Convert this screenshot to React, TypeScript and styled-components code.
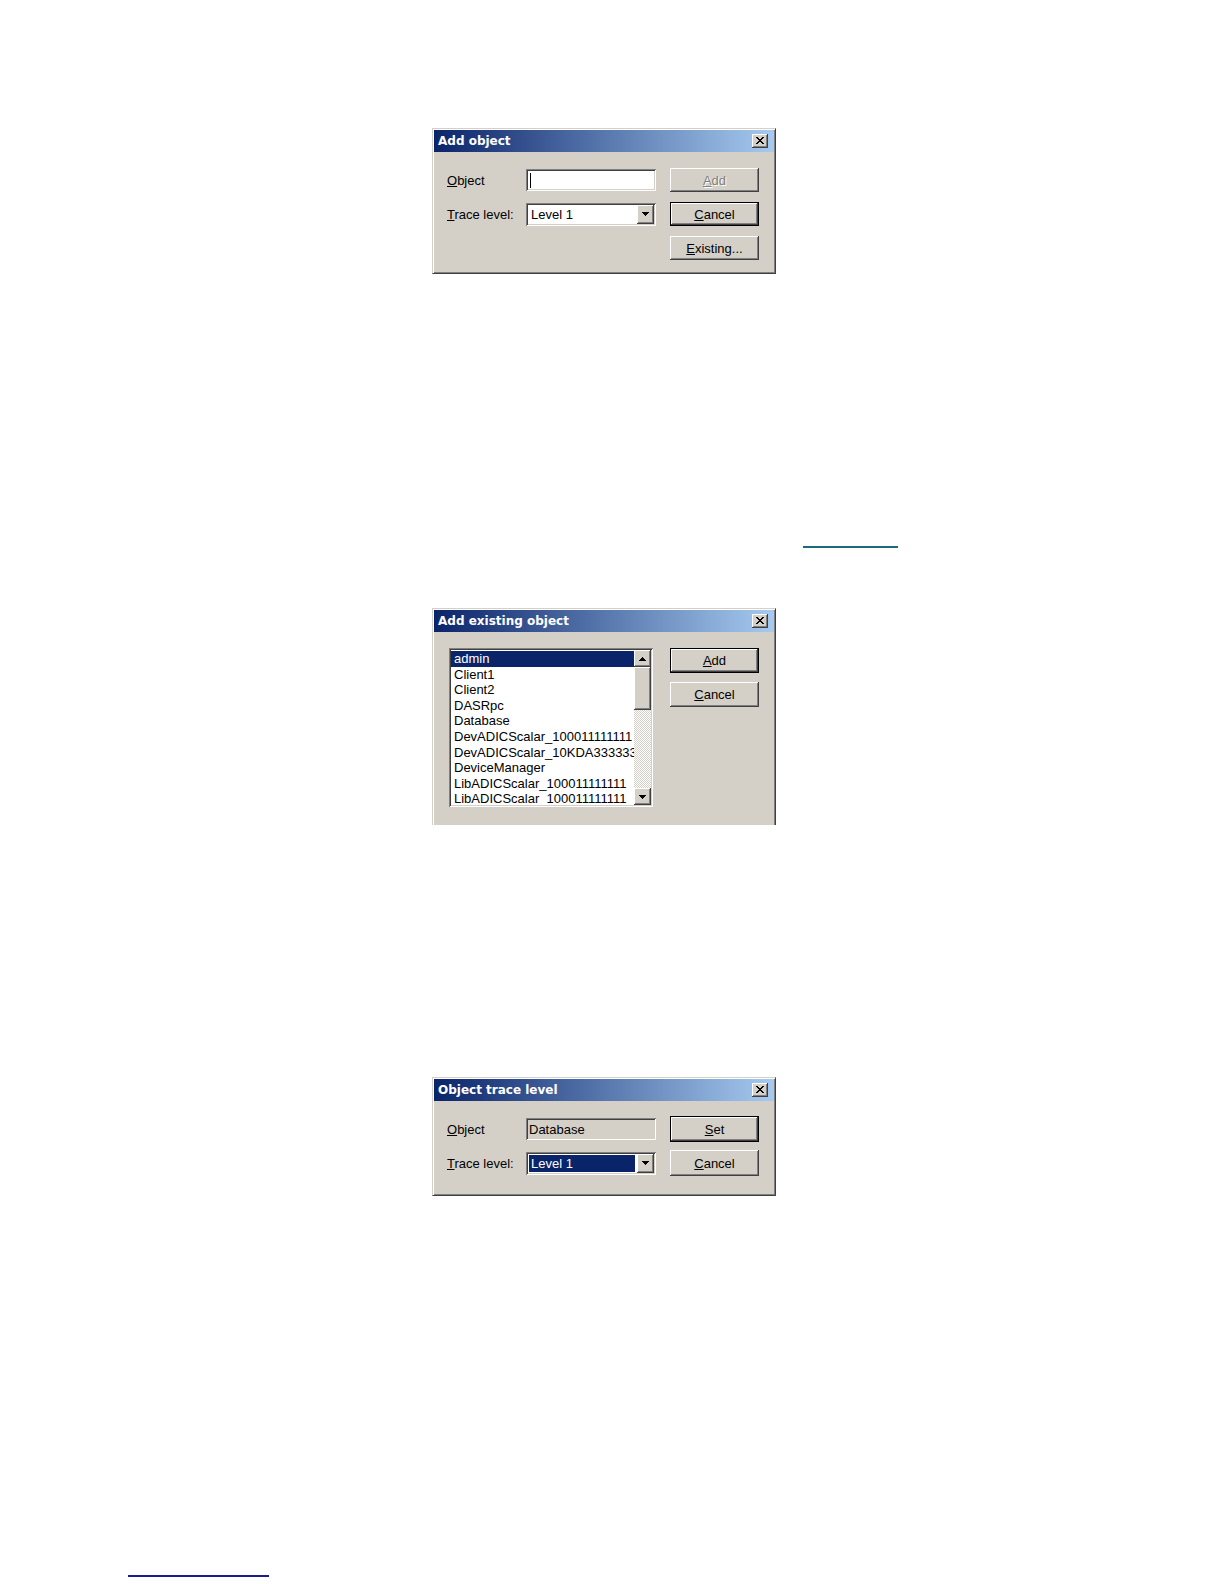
import React from 'react';
import styled, { createGlobalStyle, css } from 'styled-components';

const GlobalStyle = createGlobalStyle`
  html, body {
    margin: 0;
    padding: 0;
    background: #fff;
  }
  body {
    font-family: "Liberation Sans", Arial, sans-serif;
    font-size: 13px;
    color: #000;
  }
`;

const raised = css`
  box-shadow: inset -1px -1px #404040, inset 1px 1px #fff, inset -2px -2px #808080, inset 2px 2px #d4d0c8;
`;

const sunken = css`
  box-shadow: inset 1px 1px #808080, inset -1px -1px #fff, inset 2px 2px #404040, inset -2px -2px #d4d0c8;
`;

const Page = styled.main`
  width: 1224px;
  height: 1584px;
  box-sizing: border-box;
  padding-top: 128px;
  display: flex;
  flex-direction: column;
  overflow: hidden;
  background: #fff;
`;

const Win = styled.section<{ $h: number; $top: number; $cut?: boolean }>`
  flex: none;
  box-sizing: border-box;
  width: 344px;
  height: ${(p) => p.$h}px;
  margin: ${(p) => p.$top}px 0 0 432px;
  padding: 1px;
  background: #d4d0c8;
  border: 1px solid;
  border-color: #d4d0c8 #404040 #404040 #d4d0c8;
  border-bottom-width: ${(p) => (p.$cut ? 0 : 1)}px;
  box-shadow: ${(p) => (p.$cut ? 'inset 1px 1px #fff, inset -1px 0 #808080' : 'inset 1px 1px #fff, inset -1px -1px #808080')};
  display: flex;
  flex-direction: column;
  overflow: hidden;
`;

const TitleBar = styled.header`
  flex: none;
  height: 22px;
  display: flex;
  align-items: center;
  justify-content: space-between;
  padding: 0 6px 0 4px;
  background: linear-gradient(to right, #0a246a, #a6caf0);
  color: #fff;
  font: bold 12px "DejaVu Sans", Tahoma, sans-serif;
`;

const CloseBtn = styled.div`
  box-sizing: border-box;
  width: 16px;
  height: 14px;
  background: #d4d0c8;
  ${raised}
  display: flex;
  align-items: center;
  justify-content: center;
  padding: 0 1px 1px 0;
`;

const FormBody = styled.div<{ $pt: number; $row: number; $gap: number }>`
  display: grid;
  grid-template-columns: 79px 144px 89px;
  grid-auto-rows: ${(p) => p.$row}px;
  row-gap: ${(p) => p.$gap}px;
  align-items: center;
  padding: ${(p) => p.$pt}px 0 0 13px;
`;

const Label = styled.span`
  font-size: 13px;
  white-space: nowrap;
`;

const Key = styled.span`
  text-decoration: underline;
  text-underline-offset: 1px;
`;

const Btn = styled.div<{ $default?: boolean; $disabled?: boolean; $col?: number }>`
  grid-column: ${(p) => p.$col ?? 'auto'};
  box-sizing: border-box;
  width: 89px;
  height: 100%;
  display: flex;
  align-items: center;
  justify-content: center;
  background: #d4d0c8;
  border: ${(p) => (p.$default ? '1px solid #000' : '0')};
  ${raised}
  color: ${(p) => (p.$disabled ? '#808080' : '#000')};
  text-shadow: ${(p) => (p.$disabled ? '1px 1px #fff' : 'none')};
  font-size: 13px;
`;

const Field = styled.div<{ $readOnly?: boolean }>`
  box-sizing: border-box;
  width: 130px;
  height: 22px;
  padding: 2px 3px;
  display: flex;
  align-items: center;
  background: ${(p) => (p.$readOnly ? '#d4d0c8' : '#fff')};
  ${sunken}
  font-size: 13px;
`;

const Caret = styled.span`
  display: block;
  width: 1px;
  height: 15px;
  margin-left: 1px;
  background: #000;
`;

const Combo = styled.div`
  box-sizing: border-box;
  width: 130px;
  height: 23px;
  padding: 2px;
  display: flex;
  background: #fff;
  ${sunken}
`;

const ComboText = styled.div<{ $selected?: boolean }>`
  flex: 1;
  margin: 1px 2px 1px 1px;
  padding-left: 2px;
  display: flex;
  align-items: center;
  background: ${(p) => (p.$selected ? '#0a246a' : 'transparent')};
  color: ${(p) => (p.$selected ? '#fff' : '#000')};
  font-size: 13px;
`;

const ArrowBtn = styled.div<{ $h?: number }>`
  flex: none;
  box-sizing: border-box;
  width: 17px;
  height: ${(p) => (p.$h ? `${p.$h}px` : 'auto')};
  background: #d4d0c8;
  ${raised}
  display: flex;
  align-items: center;
  justify-content: center;
`;

const ListBody = styled.div`
  display: flex;
  gap: 17px;
  padding: 16px 0 0 15px;
`;

const ListBox = styled.div`
  flex: none;
  box-sizing: border-box;
  width: 204px;
  height: 159px;
  padding: 2px;
  display: flex;
  background: #fff;
  ${sunken}
`;

const Items = styled.ul`
  flex: 1;
  min-width: 0;
  margin: 0;
  padding: 1px 0 0;
  list-style: none;
  overflow: hidden;
`;

const Item = styled.li<{ $selected?: boolean }>`
  height: 15.6px;
  line-height: 15.6px;
  padding-left: 3px;
  white-space: nowrap;
  overflow: hidden;
  font-size: 13px;
  background: ${(p) => (p.$selected ? '#0a246a' : 'transparent')};
  color: ${(p) => (p.$selected ? '#fff' : '#000')};
`;

const ScrollBar = styled.div`
  flex: none;
  width: 17px;
  display: flex;
  flex-direction: column;
`;

const Track = styled.div`
  flex: 1;
  background-color: #fff;
  background-image: conic-gradient(#d4d0c8 25%, #fff 0 50%, #d4d0c8 0 75%, #fff 0);
  background-size: 2px 2px;
`;

const Thumb = styled.div`
  height: 43px;
  background: #d4d0c8;
  ${raised}
`;

const ButtonStack = styled.div`
  display: flex;
  flex-direction: column;
  gap: 9px;
  height: 59px;
  & > div {
    height: 25px;
  }
`;

const Rule = styled.div<{ $top: number; $left: number; $width: number; $color: string }>`
  flex: none;
  margin: ${(p) => p.$top}px 0 0 ${(p) => p.$left}px;
  width: ${(p) => p.$width}px;
  height: 2px;
  background: ${(p) => p.$color};
`;

function CloseIcon() {
  return (
    <svg width="8" height="7" viewBox="0 0 8 7" shapeRendering="crispEdges">
      <path d="M0 0h2v1h1v1h2v-1h1v-1h2v1h-1v1h-1v1h-1v1h1v1h1v1h1v1h-2v-1h-1v-1h-2v1h-1v1h-2v-1h1v-1h1v-1h1v-1h-1v-1h-1v-1h-1z" fill="#000" />
    </svg>
  );
}

function Arrow({ up }: { up?: boolean }) {
  return (
    <svg width="7" height="4" viewBox="0 0 7 4" shapeRendering="crispEdges" style={up ? { transform: 'scaleY(-1)' } : undefined}>
      <path d="M0 0h7v1h-1v1h-1v1h-1v1h-1v-1h-1v-1h-1v-1h-1z" fill="#000" />
    </svg>
  );
}

function Title({ text }: { text: string }) {
  return (
    <TitleBar>
      <span>{text}</span>
      <CloseBtn>
        <CloseIcon />
      </CloseBtn>
    </TitleBar>
  );
}

const objects = [
  'admin',
  'Client1',
  'Client2',
  'DASRpc',
  'Database',
  'DevADICScalar_100011111111',
  'DevADICScalar_10KDA333333',
  'DeviceManager',
  'LibADICScalar_100011111111',
  'LibADICScalar_100011111111',
];

export default function App() {
  return (
    <>
      <GlobalStyle />
      <Page>
        <Win $h={146} $top={0}>
          <Title text="Add object" />
          <FormBody $pt={16} $row={24} $gap={10}>
            <Label>
              <Key>O</Key>bject
            </Label>
            <Field>
              <Caret />
            </Field>
            <Btn $disabled>
              <span>
                <Key>A</Key>dd
              </span>
            </Btn>
            <Label>
              <Key>T</Key>race level:
            </Label>
            <Combo>
              <ComboText>Level 1</ComboText>
              <ArrowBtn>
                <Arrow />
              </ArrowBtn>
            </Combo>
            <Btn $default>
              <span>
                <Key>C</Key>ancel
              </span>
            </Btn>
            <Btn $col={3}>
              <span>
                <Key>E</Key>xisting...
              </span>
            </Btn>
          </FormBody>
        </Win>

        <Rule $top={272} $left={803} $width={95} $color="#1b6b7c" />

        <Win $h={217} $top={60} $cut>
          <Title text="Add existing object" />
          <ListBody>
            <ListBox>
              <Items>
                {objects.map((name, i) => (
                  <Item key={i} $selected={i === 0}>
                    {name}
                  </Item>
                ))}
              </Items>
              <ScrollBar>
                <ArrowBtn $h={17}>
                  <Arrow up />
                </ArrowBtn>
                <Track>
                  <Thumb />
                </Track>
                <ArrowBtn $h={17}>
                  <Arrow />
                </ArrowBtn>
              </ScrollBar>
            </ListBox>
            <ButtonStack>
              <Btn $default>
                <span>
                  <Key>A</Key>dd
                </span>
              </Btn>
              <Btn>
                <span>
                  <Key>C</Key>ancel
                </span>
              </Btn>
            </ButtonStack>
          </ListBody>
        </Win>

        <Win $h={119} $top={252}>
          <Title text="Object trace level" />
          <FormBody $pt={15} $row={26} $gap={8}>
            <Label>
              <Key>O</Key>bject
            </Label>
            <Field $readOnly>Database</Field>
            <Btn $default>
              <span>
                <Key>S</Key>et
              </span>
            </Btn>
            <Label>
              <Key>T</Key>race level:
            </Label>
            <Combo>
              <ComboText $selected>Level 1</ComboText>
              <ArrowBtn>
                <Arrow />
              </ArrowBtn>
            </Combo>
            <Btn>
              <span>
                <Key>C</Key>ancel
              </span>
            </Btn>
          </FormBody>
        </Win>

        <Rule $top={379} $left={128} $width={141} $color="#1c1c8c" />
      </Page>
    </>
  );
}
